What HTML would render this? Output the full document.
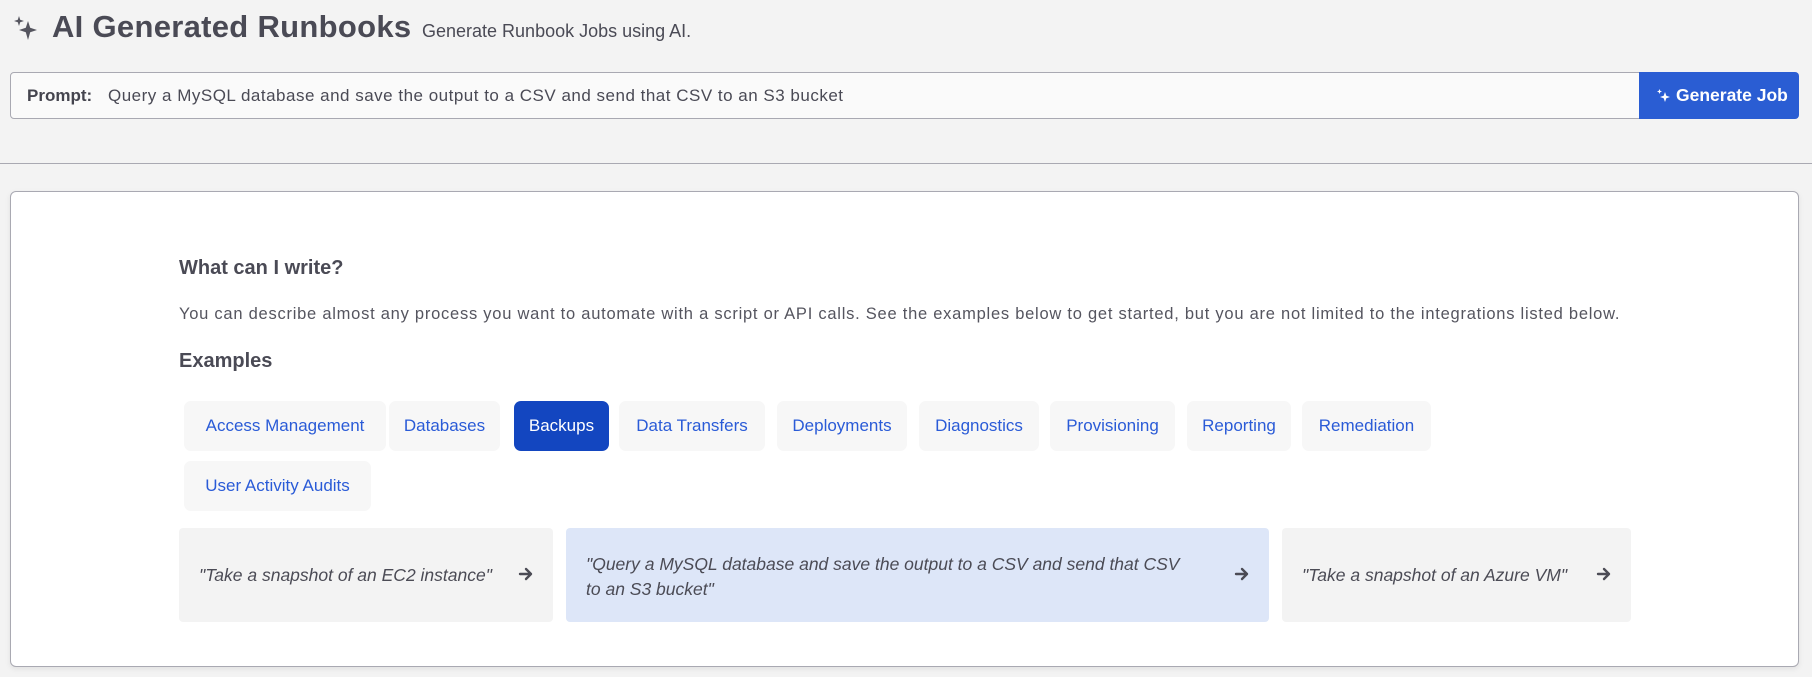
<!DOCTYPE html>
<html><head><meta charset="utf-8"><style>
*{box-sizing:border-box;margin:0;padding:0}
body{width:1812px;height:677px;background:#f3f3f3;font-family:"Liberation Sans",sans-serif;color:#4b4b55;position:relative;overflow:hidden}
.hdr{position:absolute;left:0;top:0;width:1812px;height:164px;background:#f3f3f3;border-bottom:1px solid #a9a9b2}
.title{position:absolute;left:52px;top:9px;font-size:31px;font-weight:bold;color:#4a4a55;letter-spacing:0.3px;white-space:nowrap}
.sub{position:absolute;left:422px;top:21px;font-size:18px;color:#4a4a55;white-space:nowrap}
.prompt{position:absolute;left:10px;top:72px;width:1630px;height:47px;background:#fafafa;border:1px solid #a9a9b2;border-radius:4px 0 0 4px}
.prompt b{position:absolute;left:16px;top:13px;font-size:17px;color:#44444e}
.prompt span{position:absolute;left:97px;top:13px;font-size:17px;color:#4a4a55;letter-spacing:0.5px;white-space:nowrap}
.btn{position:absolute;left:1639px;top:72px;width:160px;height:47px;background:#2a5dd3;border-radius:0 4px 4px 0;color:#fff;font-size:17.5px;font-weight:bold}
.btn span{position:absolute;left:37px;top:13px}
.card{position:absolute;left:10px;top:191px;width:1789px;height:476px;background:#fff;border:1px solid #a9a9b2;border-radius:6px;box-shadow:0 2px 6px rgba(0,0,0,.08)}
h2{position:absolute;left:179px;top:257px;font-size:20px;font-weight:bold;color:#4a4a55}
p.d{position:absolute;left:179px;top:305px;font-size:16.5px;letter-spacing:0.75px;color:#55555f;white-space:nowrap}
h3{position:absolute;left:179px;top:350px;font-size:20px;font-weight:bold;color:#4a4a55}
.chip{position:absolute;height:50px;background:#f7f7f7;border-radius:7px;color:#2a5bd7;font-size:17px;line-height:50px;text-align:center;white-space:nowrap}
.chip.sel{background:#1346c0;color:#fff}
.ex{position:absolute;top:528px;height:94px;background:#f3f3f3;border-radius:4px;font-style:italic;font-size:17.5px;color:#4b4b55}
.ex .t{position:absolute;left:20px;top:37px;white-space:nowrap}
.ex svg{position:absolute;top:38px}
</style></head><body>
<div class="hdr">
<svg style="position:absolute;left:13px;top:15px" width="28" height="27" viewBox="0 0 28 27"><path d="M15 6 L17.2 12.8 L24 15 L17.2 17.2 L15 25 L12.8 17.2 L6 15 L12.8 12.8 Z" fill="#55555f"/><path d="M6 1 L7.2 4.8 L11 6 L7.2 7.2 L6 11 L4.8 7.2 L1 6 L4.8 4.8 Z" fill="#55555f"/></svg>
<div class="title">AI Generated Runbooks</div>
<div class="sub">Generate Runbook Jobs using AI.</div>
<div class="prompt"><b>Prompt:</b><span>Query a MySQL database and save the output to a CSV and send that CSV to an S3 bucket</span></div>
<div class="btn"><svg style="position:absolute;left:17px;top:16px" width="16" height="16" viewBox="0 0 16 16"><path d="M9 4 L10.3 7.7 L14 9 L10.3 10.3 L9 14 L7.7 10.3 L4 9 L7.7 7.7 Z" fill="#fff"/><path d="M3.5 1 L4.2 2.8 L6 3.5 L4.2 4.2 L3.5 6 L2.8 4.2 L1 3.5 L2.8 2.8 Z" fill="#fff"/></svg><span>Generate Job</span></div>
</div>
<div class="card"></div>
<h2>What can I write?</h2>
<p class="d">You can describe almost any process you want to automate with a script or API calls. See the examples below to get started, but you are not limited to the integrations listed below.</p>
<h3>Examples</h3>
<div class="chip" style="left:184px;top:401px;width:202px">Access Management</div>
<div class="chip" style="left:389px;top:401px;width:111px">Databases</div>
<div class="chip sel" style="left:514px;top:401px;width:95px">Backups</div>
<div class="chip" style="left:619px;top:401px;width:146px">Data Transfers</div>
<div class="chip" style="left:777px;top:401px;width:130px">Deployments</div>
<div class="chip" style="left:919px;top:401px;width:120px">Diagnostics</div>
<div class="chip" style="left:1050px;top:401px;width:125px">Provisioning</div>
<div class="chip" style="left:1187px;top:401px;width:104px">Reporting</div>
<div class="chip" style="left:1302px;top:401px;width:129px">Remediation</div>
<div class="chip" style="left:184px;top:461px;width:187px">User Activity Audits</div>
<div class="ex" style="left:179px;width:374px"><span class="t">"Take a snapshot of an EC2 instance"</span><svg style="left:339px" width="16" height="16" viewBox="0 0 16 16"><path d="M2 8 H13 M8 3 L13 8 L8 13" stroke="#4b4b55" stroke-width="2.4" fill="none" stroke-linecap="round" stroke-linejoin="round"/></svg></div>
<div class="ex" style="left:566px;width:703px;background:#dde6f8"><span class="t" style="top:24px;line-height:25px">"Query a MySQL database and save the output to a CSV and send that CSV<br>to an S3 bucket"</span><svg style="left:668px" width="16" height="16" viewBox="0 0 16 16"><path d="M2 8 H13 M8 3 L13 8 L8 13" stroke="#4b4b55" stroke-width="2.4" fill="none" stroke-linecap="round" stroke-linejoin="round"/></svg></div>
<div class="ex" style="left:1282px;width:349px"><span class="t">"Take a snapshot of an Azure VM"</span><svg style="left:314px" width="16" height="16" viewBox="0 0 16 16"><path d="M2 8 H13 M8 3 L13 8 L8 13" stroke="#4b4b55" stroke-width="2.4" fill="none" stroke-linecap="round" stroke-linejoin="round"/></svg></div>
</body></html>
